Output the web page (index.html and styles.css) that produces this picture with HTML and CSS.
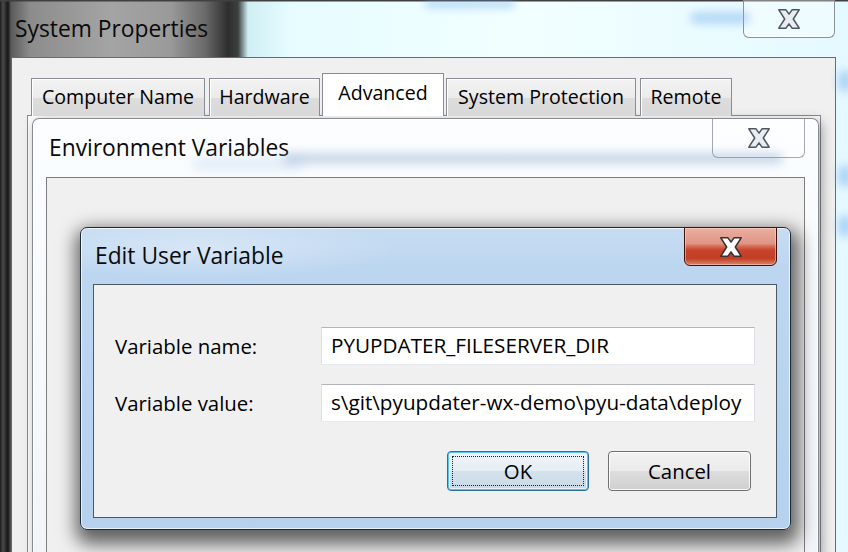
FILE: index.html
```html
<!DOCTYPE html>
<html>
<head>
<meta charset="utf-8">
<link rel="stylesheet" href="styles.css">
</head>
<body>
<div class="desk">
  <div class="win sys">
    <div class="smudge sm1"></div>
    <div class="smudge sm2"></div>
    <div class="smudge sm3"></div>
    <div class="smudge sm4"></div>
    <div class="smudge sm5"></div>
    <div class="titlebar sys-bar">
      <div class="title">System Properties</div>
      <div class="cap-close inactive">
        <svg width="22" height="20" viewBox="0 0 22 20"><polygon points="0.8,0.8 8,0.8 11,5.2 14,0.8 21.2,0.8 15.3,10 21.2,19.2 14,19.2 11,14.8 8,19.2 0.8,19.2 6.7,10"/></svg>
      </div>
    </div>
    <div class="sys-client">
      <div class="tabs">
        <div class="tab t-cn">Computer Name</div>
        <div class="tab t-hw">Hardware</div>
        <div class="tab t-adv sel">Advanced</div>
        <div class="tab t-sp">System Protection</div>
        <div class="tab t-rm">Remote</div>
      </div>
      <div class="tabpanel"></div>
    </div>
  </div>

  <div class="win env">
    <div class="smudge es1"></div>
    <div class="smudge es2"></div>
    <div class="titlebar env-bar">
      <div class="title">Environment Variables</div>
      <div class="cap-close inactive">
        <svg width="22" height="20" viewBox="0 0 22 20"><polygon points="0.8,0.8 8,0.8 11,5.2 14,0.8 21.2,0.8 15.3,10 21.2,19.2 14,19.2 11,14.8 8,19.2 0.8,19.2 6.7,10"/></svg>
      </div>
    </div>
    <div class="env-client"></div>
  </div>

  <div class="win edit">
    <div class="titlebar edit-bar">
      <div class="title">Edit User Variable</div>
      <div class="cap-close active">
        <svg width="22" height="20" viewBox="0 0 22 20"><polygon points="0.8,0.8 8,0.8 11,5.2 14,0.8 21.2,0.8 15.3,10 21.2,19.2 14,19.2 11,14.8 8,19.2 0.8,19.2 6.7,10"/></svg>
      </div>
    </div>
    <div class="edit-client">
      <div class="form">
        <label class="lbl">Variable name:</label>
        <div class="field">PYUPDATER_FILESERVER_DIR</div>
        <label class="lbl">Variable value:</label>
        <div class="field">s\git\pyupdater-wx-demo\pyu-data\deploy</div>
      </div>
      <div class="buttons">
        <div class="btn default"><span class="focus">OK</span></div>
        <div class="btn">Cancel</div>
      </div>
    </div>
  </div>
</div>
</body>
</html>
```

FILE: styles.css
```css
* { box-sizing: border-box; }
html, body { margin: 0; padding: 0; }
body {
  width: 848px;
  height: 552px;
  overflow: hidden;
  font-family: "Open Sans", "Noto Sans", sans-serif;
  font-size: 20.4px;
  color: #000;
}
.desk { position: relative; width: 848px; height: 552px; }

.win { position: absolute; display: flex; flex-direction: column; }

/* ---------- System Properties (outer glass) ---------- */
.sys {
  left: 0; top: 0; width: 848px; height: 552px;
  background:
    linear-gradient(to bottom, #404040 0, #404040 1px, rgba(0,0,0,0) 2px),
    linear-gradient(to right, #1c1c1c 0, #4a4a4a 3px, #151515 8px, #5a5a5a 11px, #8c8c8c 30px, #a4a4a4 110px, #9a9a9a 170px, #6a6a6a 205px, #2e2e2e 228px, #3c4040 238px, #cfeff4 248px, #e6fcff 290px, #f2ffff 520px, #e8fbff 760px, #e4f9ff 848px);
}
.smudge { position: absolute; border-radius: 8px; filter: blur(4px); }
.sm1 { left: 425px; top: 0; width: 90px; height: 8px; background: rgba(110,170,235,.45); }
.sm2 { left: 690px; top: 12px; width: 60px; height: 12px; background: rgba(120,175,235,.45); }
.sm3 { left: 838px; top: 70px; width: 14px; height: 22px; background: rgba(120,175,235,.5); }
.sm4 { left: 838px; top: 165px; width: 14px; height: 22px; background: rgba(120,175,235,.5); }
.sm5 { left: 838px; top: 215px; width: 14px; height: 22px; background: rgba(120,175,235,.5); }

.titlebar {
  display: flex;
  justify-content: space-between;
  align-items: flex-start;
  flex: none;
}
.title { white-space: nowrap; font-size: 22.8px; line-height: 30px; }

.sys-bar { height: 57px; padding-left: 15px; }
.sys-bar .title { margin-top: 14px; color: #0a0a0a; }
.sys-bar .cap-close { margin-right: 13px; width: 92px; height: 38px; }

.cap-close {
  display: flex;
  align-items: center;
  justify-content: center;
  border: 1px solid #8b9097;
  border-top: none;
  border-radius: 0 0 6px 6px;
}
.cap-close.inactive { background: rgba(255,255,255,.35); box-shadow: inset 0 -1px 0 rgba(255,255,255,.8); }
.cap-close.inactive svg polygon { fill: #e9edf1; stroke: #4f5663; stroke-width: 1.5; stroke-linejoin: round; }

.sys-client {
  flex: 1;
  margin: 0 12px 0 11px;
  border: 1px solid #666b72;
  border-bottom: none;
  background: #f0f0f0;
  padding: 16px 14px 0 15px;
  display: flex;
  flex-direction: column;
}
.tabs {
  display: flex;
  align-items: flex-end;
  gap: 4px;
  padding-left: 4px;
  height: 42px;
  position: relative;
  z-index: 1;
  margin-bottom: -1px;
}
.tab {
  height: 38px;
  border: 1px solid #898c95;
  border-bottom: none;
  background: linear-gradient(#f3f3f3 0, #ebebeb 50%, #dddddd 51%, #d8d8d8 100%);
  display: flex;
  align-items: center;
  justify-content: center;
  white-space: nowrap;
  font-size: 19.6px;
  padding-bottom: 2px;
  box-shadow: inset 1px 1px 0 #fff;
}
.t-cn { width: 174px; }
.t-hw { width: 111px; }
.t-adv { width: 122px; }
.t-sp { width: 190px; }
.t-rm { width: 92px; }
.tab.sel {
  height: 43px;
  margin: 0 -2px;
  background: #fff;
  padding-bottom: 5px;
  box-shadow: none;
}
.tabpanel {
  flex: 1;
  border: 1px solid #898c95;
  border-bottom: none;
  background: #fcfcfc;
}

/* ---------- Environment Variables ---------- */
.env {
  left: 32px; top: 118px; width: 787px; height: 450px;
  border: 1px solid #868a91;
  border-bottom: none;
  border-radius: 7px 7px 0 0;
  background: linear-gradient(#fbfdff, #f1f5fa);
  box-shadow: 3px 3px 12px rgba(0,0,0,.35), inset 0 0 0 1px #fff;
}
.es1 { left: 250px; top: 34px; width: 500px; height: 11px; background: rgba(100,140,190,.32); filter: blur(5px); }
.es2 { left: 160px; top: 40px; width: 110px; height: 10px; background: rgba(150,190,230,.3); filter: blur(6px); }
.env-bar { height: 58px; padding-left: 16px; }
.env-bar .title { margin-top: 14px; color: #0a0a0a; }
.env-bar .cap-close { margin-right: 13px; width: 93px; height: 39px; border-color: #a4a8ae; }
.env-client {
  flex: 1;
  margin: 0 13px 0 13px;
  border: 1px solid #7e7e7e;
  border-bottom: none;
  background: #f0f0f0;
}

/* ---------- Edit User Variable ---------- */
.edit {
  left: 80px; top: 227px; width: 711px; height: 303px;
  border: 1px solid #1d2835;
  border-radius: 7px;
  background:
    radial-gradient(ellipse 200px 30px at 120px 20px, rgba(255,255,255,.35), rgba(255,255,255,0)),
    linear-gradient(#c6dcf2 0, #bdd6f0 40px, #b5d1ee 100%);
  box-shadow: 2px 8px 18px 6px rgba(0,0,0,.6), inset 0 0 0 1px rgba(255,255,255,.7);
}
.edit-bar { height: 56px; padding-left: 14px; }
.edit-bar .title { margin-top: 13px; color: #0a0a0a; }
.cap-close.active {
  margin-right: 13px;
  margin-top: -1px;
  width: 93px;
  height: 39px;
  border: 1px solid #3e1208;
  background: linear-gradient(#eab0a2 0, #e09484 42%, #d46a52 50%, #c7432a 60%, #c23f24 82%, #d9866c 100%);
  box-shadow: inset 0 0 0 1px rgba(255,220,210,.5);
}
.cap-close.active svg polygon { fill: #fff; stroke: #3a3030; stroke-width: 1.5; stroke-linejoin: round; }

.edit-client {
  flex: none;
  height: 234px;
  margin: 0 13px 0 12px;
  border: 1px solid #4a5867;
  background: #f0f0f0;
  padding: 42px 21px 26px 21px;
  display: flex;
  flex-direction: column;
}
.form {
  display: grid;
  grid-template-columns: 206px 1fr;
  row-gap: 19px;
  align-items: center;
}
.lbl { white-space: nowrap; line-height: 38px; }
.field {
  height: 38px;
  background: #fff;
  border: 1px solid;
  border-color: #b3b5ba #dde1e7 #e6eaf0 #dde1e7;
  padding: 0 9px;
  line-height: 35px;
  font-size: 20.7px;
  white-space: nowrap;
  overflow: hidden;
}
.buttons {
  margin-top: 29px;
  display: flex;
  justify-content: flex-end;
  gap: 19px;
  padding-right: 4px;
}
.btn {
  width: 143px;
  height: 40px;
  border: 1px solid #707070;
  border-radius: 4px;
  background: linear-gradient(#f2f2f2 0, #ebebeb 49%, #dddddd 51%, #d0d0d0 100%);
  box-shadow: inset 0 0 0 1px rgba(255,255,255,.85);
  display: flex;
  align-items: center;
  justify-content: center;
  line-height: 1;
}
.btn.default {
  width: 142px;
  border-color: #2f6f9f;
  background: linear-gradient(#eef4f9 0, #e6eef5 49%, #d4e2ec 51%, #c9dae6 100%);
  box-shadow: inset 0 0 0 1px #52c5f0, inset 0 0 0 2px rgba(255,255,255,.6);
  padding: 4px;
}
.focus {
  flex: 1;
  align-self: stretch;
  border: 1px dotted #222;
  display: flex;
  align-items: center;
  justify-content: center;
}
```
